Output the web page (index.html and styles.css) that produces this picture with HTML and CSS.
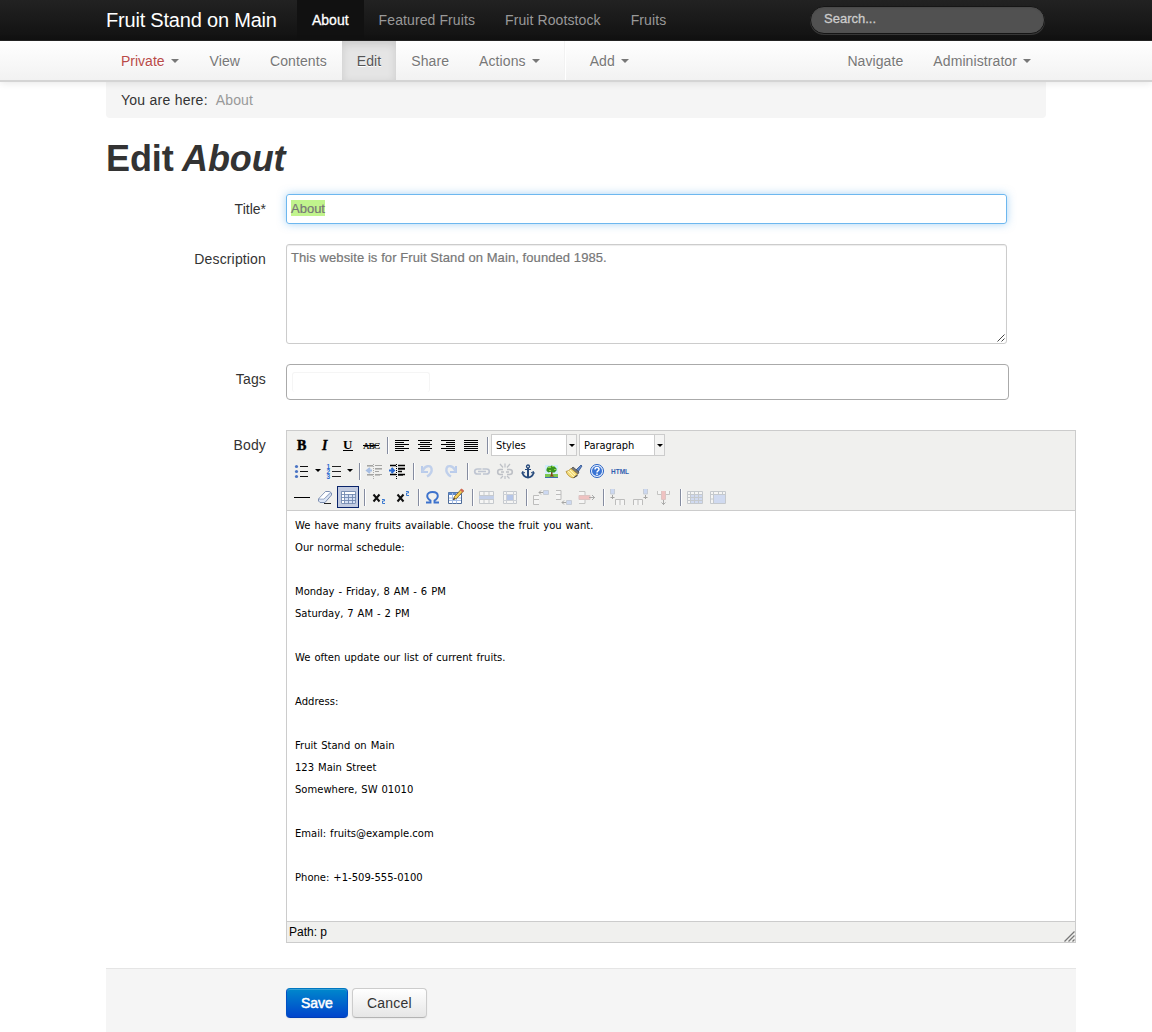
FILE: index.html
```html
<!DOCTYPE html>
<html lang="en">
<head>
<meta charset="utf-8">
<title>Edit About</title>
<link rel="stylesheet" href="styles.css">
</head>
<body>
<header class="topbar">
  <div class="wrap">
    <a class="brand">Fruit Stand on Main</a>
    <nav class="sections">
      <a class="active">About</a><a>Featured Fruits</a><a>Fruit Rootstock</a><a>Fruits</a>
    </nav>
    <input class="search" type="text" placeholder="Search...">
  </div>
</header>
<div class="editbar">
  <div class="wrap">
    <nav class="actions">
      <a class="private">Private<i class="caret"></i></a><a>View</a><a>Contents</a><a class="current">Edit</a><a>Share</a><a>Actions<i class="caret"></i></a>
      <span class="divider"></span>
      <a class="add">Add<i class="caret"></i></a>
    </nav>
    <nav class="actions"><a>Navigate</a><a>Administrator<i class="caret"></i></a></nav>
  </div>
</div>
<main class="page">
  <div class="breadcrumb"><span class="where">You are here:</span><span class="here">About</span></div>
  <h1>Edit <em>About</em></h1>
  <form>
    <div class="row row-title"><label>Title*</label><div class="field title-field"><mark>About</mark></div></div>
    <div class="row row-desc"><label>Description</label>
      <div class="field desc-field">This website is for Fruit Stand on Main, founded 1985.
        <svg class="grip" width="8" height="8" viewBox="0 0 8 8"><path d="M.5 7.500l7-7M4.500 7.500l3-3" stroke="#444" fill="none"/></svg>
      </div></div>
    <div class="row row-tags"><label>Tags</label><div class="tags-field"><div class="tag-input"></div></div></div>
    <div class="row row-body"><label>Body</label>
      <div class="editor">
        <div class="tools">
          <div class="toolrow">
            <b class="tb"><svg viewBox="0 0 20 20"><text x="5" y="15" class="serif" font-weight="bold" stroke="#000" stroke-width=".5">B</text></svg></b>
            <b class="tb"><svg viewBox="0 0 20 20"><text x="7" y="15" class="serif" font-style="italic" font-weight="bold" stroke="#000" stroke-width=".3">I</text></svg></b>
            <b class="tb"><svg viewBox="0 0 20 20"><text x="5" y="14" class="serif u" font-weight="bold">U</text><path d="M5 15.500h10" stroke="#000"/></svg></b>
            <b class="tb"><svg viewBox="0 0 20 20"><text x="2" y="14" class="abc">ABC</text><path d="M2 10.500h16" stroke="#000"/></svg></b>
            <s class="sep"></s>
            <b class="tb"><svg viewBox="0 0 20 20"><path d="M3 5.500h14M3 7.500h9M3 9.500h14M3 11.500h9M3 13.500h14M3 15.500h9" stroke="#000"/></svg></b>
            <b class="tb"><svg viewBox="0 0 20 20"><path d="M3 5.500h14M5 7.500h10M3 9.500h14M5 11.500h10M3 13.500h14M5 15.500h10" stroke="#000"/></svg></b>
            <b class="tb"><svg viewBox="0 0 20 20"><path d="M3 5.500h14M8 7.500h9M3 9.500h14M8 11.500h9M3 13.500h14M8 15.500h9" stroke="#000"/></svg></b>
            <b class="tb"><svg viewBox="0 0 20 20"><path d="M3 5.500h14M3 7.500h14M3 9.500h14M3 11.500h14M3 13.500h14M3 15.500h14" stroke="#000"/></svg></b>
            <s class="sep"></s>
            <div class="list"><span>Styles</span><i></i></div>
            <div class="list"><span>Paragraph</span><i></i></div>
          </div>
          <div class="toolrow">
            <b class="tb"><svg viewBox="0 0 20 20"><path d="M8 5.500h8M8 10.500h8M8 15.500h8" stroke="#111"/><g fill="#4a74c4"><circle cx="4.500" cy="5.500" r="1.600"/><circle cx="4.500" cy="10.500" r="1.600"/><circle cx="4.500" cy="15.500" r="1.600"/></g></svg></b><i class="open"></i>
            <b class="tb"><svg viewBox="0 0 20 20"><path d="M8 5.500h9M8 10.500h9M8 15.500h9" stroke="#222"/><text class="num" x="2.500" y="7.500">1</text><text class="num" x="2.500" y="12.500">2</text><text class="num" x="2.500" y="17.500">3</text></svg></b><i class="open"></i>
            <s class="sep"></s>
            <b class="tb off"><svg viewBox="0 0 20 20"><path d="M3 4.500h6M11 4.500h7M11 7.500h7M11 10.500h4M3 13.500h6M11 13.500h7" stroke="#222"/><path d="M3 5.500h6M11 8.500h7M3 14.500h6M11 14.500h5" stroke="#777"/><path d="M9.500 3v15" stroke="#333" stroke-dasharray="1 1"/><path d="M8 9.500H3M6 7l-3 2.500L6 12" stroke="#2868d0" stroke-width="2" fill="none"/></svg></b>
            <b class="tb"><svg viewBox="0 0 20 20"><path d="M3 4.500h6M11 4.500h7M11 7.500h7M11 10.500h4M3 13.500h6M11 13.500h7" stroke="#000" stroke-width="1.400"/><path d="M11 8.500h7M11 14.500h5" stroke="#444"/><path d="M9.500 3v15" stroke="#000" stroke-dasharray="1 1"/><path d="M2 9.500h5M4.500 7L7 9.500 4.500 12" stroke="#2868d0" stroke-width="2" fill="none"/></svg></b>
            <s class="sep"></s>
            <b class="tb off"><svg viewBox="0 0 20 20"><path d="M4 5v6h6" stroke="#5d8ee8" stroke-width="2" fill="none"/><path d="M4.500 10.500c2-6 8-7 9-3 .7 3-1 6-4.500 8" stroke="#6d98e8" stroke-width="2.400" fill="none"/></svg></b>
            <b class="tb off"><svg viewBox="0 0 20 20"><path d="M15 5v6H9" stroke="#5d8ee8" stroke-width="2" fill="none"/><path d="M14.500 10.500c-2-6-8-7-9-3-.7 3 1 6 4.500 8" stroke="#6d98e8" stroke-width="2.400" fill="none"/></svg></b>
            <s class="sep"></s>
            <b class="tb off"><svg viewBox="0 0 20 20"><g fill="none" stroke="#6a7aa0" stroke-width="1.700"><path d="M9.500 8H5.500Q2.700 8 2.700 10.500T5.500 13h3.500M10.500 8h4q2.800 0 2.800 2.500T14.500 13H11M6 10.500h8"/></g></svg></b>
            <b class="tb off"><svg viewBox="0 0 20 20"><g fill="none" stroke="#666e80" stroke-width="1.600"><path d="M8 8.500H5Q2.700 8.500 2.700 11T5 13.500h3M12 8.500h2.500q2.800 0 2.800 2.500t-2.800 2.500H12M6 11h3M11 11h3"/><path d="M10 2.500v4M5 3l3 3.500M15 3l-3 3.500M10 15v3M8 15l-2.500 2.500M12 15l2.500 2.500" stroke-width="1.200"/></g></svg></b>
            <b class="tb"><svg viewBox="0 0 20 20"><g fill="none" stroke="#274a7c"><circle cx="10" cy="5.500" r="1.500" stroke-width="1.300"/><path d="M10 7v9" stroke-width="2"/><path d="M7 8.500h6"/><path d="M4.500 11c.3 3.500 2.500 5.200 5.500 5.500 3-.3 5.200-2 5.500-5.500" stroke-width="1.800"/><path d="M4 13l.5-2.500L7 12M16 13l-.5-2.500L13 12"/></g></svg></b>
            <b class="tb"><svg viewBox="0 0 20 20"><path d="M4 4h13v13H4z" fill="#d3edfc"/><path d="M4 13h13v3H4z" fill="#7cc850"/><path d="M4 16h13v1H4z" fill="#3f6dad"/><path d="M10 10h1.500v4l2 1.500h-5L10 14z" fill="#8a3d1c"/><path d="M7 5.500h2.500l1-1 3 1 2 2v2l-2 2h-3l-1-.8-2 .8-2-1.500V8z" fill="#3a9420"/><path d="M7 6h3v1H7zM11 5h2v1h-2zM8 9h2v1H8zM13 8h2v1h-2z" fill="#8bd545"/></svg></b>
            <b class="tb"><svg viewBox="0 0 20 20"><path d="M12 9l5-5 1 1-4 6z" fill="#5e86c9" stroke="#30538f" stroke-width=".8"/><path d="M9 6l6 5-1 2-7-5z" fill="#777" stroke="#333" stroke-width=".6"/><path d="M7 7.500l6.500 5.500-4 4Q4 16 2 10.500q3-.5 5-3z" fill="#f4dd7c" stroke="#b28b2f" stroke-width=".8"/><path d="M4 10l6 6M6 9l5 5" stroke="#fff5be" fill="none"/><path d="M9 17l4.500-3.500V15L10 17z" fill="#333"/></svg></b>
            <b class="tb"><svg viewBox="0 0 20 20"><circle cx="10" cy="10" r="6.500" fill="#eef4ff" stroke="#235fc2"/><circle cx="10" cy="10" r="5" fill="#3974d4"/><path d="M8 8.500q0-2 2-2t2 1.800q0 1-1 1.500t-1 1.700M10 12.500v1.500" stroke="#fff" stroke-width="1.500" fill="none"/></svg></b>
            <b class="tb"><svg viewBox="0 0 20 20"><text x="1" y="13" class="html" textLength="18" lengthAdjust="spacingAndGlyphs">HTML</text></svg></b>
          </div>
          <div class="toolrow">
            <b class="tb"><svg viewBox="0 0 20 20"><path d="M2 10.500h16" stroke="#000"/></svg></b>
            <b class="tb"><svg viewBox="0 0 20 20"><path d="M3.500 12l7-7.500h4L16.500 6v2L10 15.500H5L3.500 14z" fill="#dce6f6" stroke="#7b8db0"/><path d="M3.500 12H9l7-6.500" stroke="#8c9dbd" fill="none"/><path d="M4.500 11.500l6-6.500h4L9 11.500z" fill="#fff"/><path d="M9 16.500h7" stroke="#222"/></svg></b>
            <b class="tb on"><svg viewBox="0 0 20 20"><path d="M3 5h15v12H3z" fill="#fff"/><path d="M7 8h10v8H7z" fill="#d5e0f5"/><path d="M3.500 4.500h14v12h-14zM3 7.500h15M3 10.500h15M3 13.500h15M6.500 5v12M10.500 7v10M14.500 7v10" fill="none" stroke="#7389b0" stroke-width=".9"/></svg></b>
            <s class="sep"></s>
            <b class="tb"><svg viewBox="0 0 20 20"><path d="M4.500 7.500l6 7M10.500 7.500l-6 7" stroke="#111" stroke-width="2"/><path d="M13 12.500h2.500V14h-2v2.500H16" stroke="#3978d0" fill="none"/></svg></b>
            <b class="tb"><svg viewBox="0 0 20 20"><path d="M5.500 7.500l6 7M11.500 7.500l-6 7" stroke="#111" stroke-width="2"/><path d="M14 4.500h2.500V6h-2v2.500H17" stroke="#3978d0" fill="none"/></svg></b>
            <s class="sep"></s>
            <b class="tb"><svg viewBox="0 0 20 20"><path d="M3 15.500h4.500v-2C5 12 4.200 10.500 4.200 9 4.200 6.500 6.500 5 9.500 5s5.300 1.500 5.300 4c0 1.500-.8 3-3.300 4.500v2H16" stroke="#3d72cc" stroke-width="1.900" fill="none"/></svg></b>
            <b class="tb"><svg viewBox="0 0 20 20"><path d="M2.500 5.500h13v11h-13z" fill="#fff" stroke="#4d6b98"/><path d="M2.500 5.500h13v2.500h-13z" fill="#5d88ca"/><path d="M3 11h12M3 13.500h12M6.500 6v10.500M10.500 6v10.500" stroke="#a4bde6"/><path d="M7.500 12.500l1-3 6.500-7L17.500 4 10.500 11.500z" fill="#f5ce55" stroke="#72521c" stroke-width=".8"/><path d="M14 3l1.500-1.500L18 3.500 16.500 5.500z" fill="#d26853"/><path d="M7 13l1-2 1 1z" fill="#111"/></svg></b>
            <s class="sep"></s>
            <b class="tb off"><svg viewBox="0 0 20 20"><path d="M2.500 4.500h14v12h-14z" fill="#fff" stroke="#7a8594"/><path d="M2 8h15v5H2z" fill="#7597df"/><path d="M2 8.500h15M2 12.500h15M7 4v4M12 4v4M7 13v4M12 13v4" stroke="#7a8594"/></svg></b>
            <b class="tb off"><svg viewBox="0 0 20 20"><path d="M3.500 4.500h13v12h-13z" fill="#fff" stroke="#7a8594"/><path d="M7 8h6v5H7z" fill="#527ee0"/><path d="M3 7.500h14M3 13.500h14M6.500 4v13M13.500 4v13" stroke="#8e9aae"/></svg></b>
            <s class="sep"></s>
            <b class="tb off"><svg viewBox="0 0 20 20"><path d="M8 8.500H2.500v9H8M3 12.500h5" fill="#fff" stroke="#666"/><path d="M8 5.500h4M10 3.500l-2 2 2 2" stroke="#222" fill="none"/><path d="M12.500 3.500h5v4h-5z" fill="#8eb0f4" stroke="#8090aa"/></svg></b>
            <b class="tb off"><svg viewBox="0 0 20 20"><path d="M2 3.500h5v9H2M2 7.500h5" fill="#fff" stroke="#666"/><path d="M8 15.500h4M10 13.500l-2 2 2 2" stroke="#222" fill="none"/><path d="M12.500 13.500h5v4h-5z" fill="#8eb0f4" stroke="#8090aa"/></svg></b>
            <b class="tb off"><svg viewBox="0 0 20 20"><path d="M2 4.500h6v12H2" fill="#fff" stroke="#777"/><path d="M2 8.500h11v4H2z" fill="#ef7474" stroke="#b77"/><path d="M12 10.500h6M15 8l2.500 2.500L15 13" fill="none" stroke="#333"/></svg></b>
            <s class="sep"></s>
            <b class="tb off"><svg viewBox="0 0 20 20"><path d="M2.500 2v5h4V2" fill="#8eb0f4" stroke="#8090aa"/><path d="M4.500 8v4M2.500 10.500h4" stroke="#222"/><path d="M7.500 18v-5.500h9V18M12 12v6" fill="#fff" stroke="#666"/></svg></b>
            <b class="tb off"><svg viewBox="0 0 20 20"><path d="M12.500 2v5h4V2" fill="#8eb0f4" stroke="#8090aa"/><path d="M14.500 8v4M12.500 10.500h4" stroke="#222"/><path d="M2.500 18v-5.500h9V18M7 12v6" fill="#fff" stroke="#666"/></svg></b>
            <b class="tb off"><svg viewBox="0 0 20 20"><path d="M3.500 4v3.500h12V4" fill="#fff" stroke="#777"/><path d="M7.500 4v8.500h4V4" fill="#ef7474" stroke="#b77"/><path d="M9.500 13v5M7.500 15.500l2 2 2-2" fill="none" stroke="#333"/></svg></b>
            <s class="sep"></s>
            <b class="tb off"><svg viewBox="0 0 20 20"><path d="M2.500 4.500h15v12h-15z" fill="#fff" stroke="#7a8594"/><path d="M6 8h11v8H6z" fill="#98b6f5"/><path d="M2 7.500h16M2 10.500h16M2 13.500h16M5.500 4v13M9.500 4v13M13.500 4v13" stroke="#7a8594"/></svg></b>
            <b class="tb off"><svg viewBox="0 0 20 20"><path d="M2.500 4.500h15v12h-15z" fill="#fff" stroke="#7a8594"/><path d="M6 8h11v8H6z" fill="#98b6f5"/><path d="M2 7.500h16M5.500 4v13M10.500 4v3M14.500 4v3M2 12h3" stroke="#7a8594"/></svg></b>
          </div>
        </div>
        <div class="doc">
          <p>We have many fruits available. Choose the fruit you want.</p>
          <p>Our normal schedule:</p>
          <p>&nbsp;</p>
          <p>Monday - Friday, 8 AM - 6 PM</p>
          <p>Saturday, 7 AM - 2 PM</p>
          <p>&nbsp;</p>
          <p>We often update our list of current fruits.</p>
          <p>&nbsp;</p>
          <p>Address:</p>
          <p>&nbsp;</p>
          <p>Fruit Stand on Main</p>
          <p>123 Main Street</p>
          <p>Somewhere, SW 01010</p>
          <p>&nbsp;</p>
          <p>Email: fruits@example.com</p>
          <p>&nbsp;</p>
          <p>Phone: +1-509-555-0100</p>
        </div>
        <div class="status"><span>Path: p</span>
          <svg width="11" height="11" viewBox="0 0 11 11"><path d="M.5 10.500l10-10M4.500 10.500l6-6M8.500 10.500l2-2" stroke="#777" stroke-width="1.300" fill="none"/></svg></div>
      </div></div>
    <div class="buttons"><a class="btn primary">Save</a><a class="btn">Cancel</a></div>
  </form>
</main>
</body>
</html>
```
FILE: styles.css
```css
* { box-sizing: border-box; }
body { margin: 0; height: 1032px; overflow: hidden; background: #fff; color: #333; font: 14px/20px "Liberation Sans", Arial, sans-serif; }
.wrap { width: 940px; margin-left: 106px; display: flex; }
.topbar { height: 41px; background: linear-gradient(#222, #111); border-bottom: 1px solid #252525; }
.topbar .wrap { height: 40px; }
.brand { width: 191px; font-size: 20px; line-height: 40px; color: #fff; letter-spacing: -0.2px; white-space: nowrap; }
.sections { display: flex; flex: 1; }
.sections a { padding: 10px 15px; color: #999; letter-spacing: .1px; white-space: nowrap; }
.sections .active { color: #fff; background: #111; -webkit-text-stroke: .3px #fff; letter-spacing: 0; }
.search { width: 235px; height: 28px; margin: 6px 1px 0 0; padding: 0 13px 3px; border: 1px solid #151515; border-radius: 14px; background: #515151; box-shadow: inset 0 1px 2px rgba(0,0,0,.1), 0 1px 0 rgba(255,255,255,.15); font: 13px "Liberation Sans", Arial, sans-serif; }
.search::placeholder { color: #ccc; opacity: 1; -webkit-text-stroke: .3px #ccc; }
.editbar { position: relative; height: 41px; background: linear-gradient(#fff, #f2f2f2); border-bottom: 2px solid #d4d4d4; box-shadow: 0 1px 8px rgba(0,0,0,.1); }
.editbar .wrap { justify-content: space-between; }
.actions { display: flex; height: 39px; }
.actions a { display: flex; padding: 10px 15px 9px; color: #777; text-shadow: 0 1px 0 #fff; letter-spacing: .09px; }
.actions .private { color: #b94a48; letter-spacing: 0; padding-right: 16px; }
.actions .current { color: #555; background: #e5e5e5; box-shadow: inset 0 3px 8px rgba(0,0,0,.125); }
.divider { width: 2px; margin: 0 9px; border-left: 1px solid #f2f2f2; border-right: 1px solid #fff; }
.caret { width: 0; height: 0; margin: 8px 0 0 6px; border: 4px solid transparent; border-top-color: #777; border-bottom: 0; }
.page { width: 970px; margin-left: 106px; }
.breadcrumb { width: 940px; height: 36px; padding: 8px 15px; display: flex; gap: 8px; background: #f5f5f5; border-radius: 0 0 4px 4px; }
.where { letter-spacing: .25px; }
.here { color: #999; letter-spacing: .1px; }
h1 { margin: 21px 0 15px; font-size: 36px; line-height: 40px; white-space: nowrap; letter-spacing: -0.1px; word-spacing: -1.5px; }
.row { display: flex; gap: 20px; }
.row label { width: 160px; padding-top: 5px; text-align: right; letter-spacing: .15px; }
.row-title label { letter-spacing: 0; }
.field { width: 721px; padding: 4px; border: 1px solid #ccc; border-radius: 3px; color: #777; font-size: 13px; line-height: 18px; -webkit-text-stroke: .2px #777; letter-spacing: .08px; }
.title-field { height: 30px; border-color: #6db7ef; box-shadow: 0 0 8px rgba(82,168,236,.5); line-height: 20px; letter-spacing: 0; }
mark { display: inline-block; height: 16px; line-height: 17px; color: #777; background: #c1f48d; }
.row-desc { margin-top: 20px; }
.desc-field { position: relative; height: 100px; box-shadow: inset 0 1px 1px rgba(0,0,0,.075); }
.grip { position: absolute; right: 1px; bottom: 1px; }
.row-tags { margin-top: 20px; }
.tags-field { width: 723px; height: 36px; padding: 7px 5px; border: 1px solid #aaa; border-radius: 4px; }
.tag-input { width: 138px; height: 20px; border: 1px solid #f5f5f5; border-bottom: 0; border-radius: 3px; }
.row-body { margin-top: 30px; }
.editor { width: 790px; height: 513px; border: 1px solid #ccc; color: #000; display: flex; flex-direction: column; }
.tools { height: 79px; padding: 3px 4px 0; background: #f0f0ee; }
.toolrow { height: 26px; display: flex; }
.tb { width: 22px; height: 22px; margin-right: 1px; border: 1px solid transparent; }
.tb svg { display: block; width: 20px; height: 20px; overflow: visible; }
.off svg { opacity: .36; }
.on { border-color: #0a246a; background: #c2cbe0; }
.sep { width: 2px; height: 17px; margin: 3px 2px 0 4px; border-left: 1px solid #858ca0; border-right: 1px solid #fff; }
.serif { font: 14px "Liberation Serif", serif; }
text.serif[font-weight] { font-weight: bold; }
text.serif[font-style] { font-style: italic; }
.serif.u { font-size: 13px; }
.abc { font: 9px "Liberation Serif", serif; letter-spacing: -0.8px; stroke: #000; stroke-width: .2px; }
.num { font: bold 6.5px "Liberation Sans", sans-serif; fill: #2868d0; }
.html { font: bold 6.5px "Liberation Sans", sans-serif; fill: #315fae; }
.open { width: 9px; margin: 9px 0 0; padding-left: 1px; }
.open::before, .list i::before { content: ""; display: block; width: 0; height: 0; border: 3px solid transparent; border-top-color: #000; border-bottom: 0; }
.list { display: flex; width: 86px; height: 22px; margin-right: 2px; border: 1px solid #ccc; background: #fff; font: 11px/21px "DejaVu Sans Condensed", "DejaVu Sans", sans-serif; font-stretch: condensed; }
.list span { width: 74px; padding-left: 4px; letter-spacing: -0.05px; }
.list i { flex: 1; padding: 9px 0 0 2px; border-left: 1px solid #ccc; background: #f4f4f3; }
.doc { flex: 1; padding: 4px 8px; border-top: 1px solid #ccc; font: 10px/22px "DejaVu Sans", Verdana, sans-serif; letter-spacing: .01px; word-spacing: .75px; }
.doc p { margin: 0; white-space: nowrap; }
.status { height: 21px; display: flex; justify-content: space-between; align-items: flex-end; padding-left: 2px; border-top: 1px solid #ccc; background: #f0f0ee; font-size: 12px; line-height: 20px; }
.buttons { height: 64px; margin-top: 25px; padding: 19px 180px; display: flex; gap: 4px; border-top: 1px solid #e5e5e5; background: #f5f5f5; }
.btn { height: 30px; padding: 4px 14px; border: 1px solid #ccc; border-bottom-color: #b3b3b3; border-radius: 4px; background: linear-gradient(#fff, #e6e6e6); box-shadow: inset 0 1px 0 rgba(255,255,255,.2), 0 1px 2px rgba(0,0,0,.05); letter-spacing: .2px; }
.primary { color: #fff; border-color: #0077c0 #0050c4 #003db5; background: linear-gradient(#0088cc, #0044cc); -webkit-text-stroke: .5px #fff; letter-spacing: 0; }
```
